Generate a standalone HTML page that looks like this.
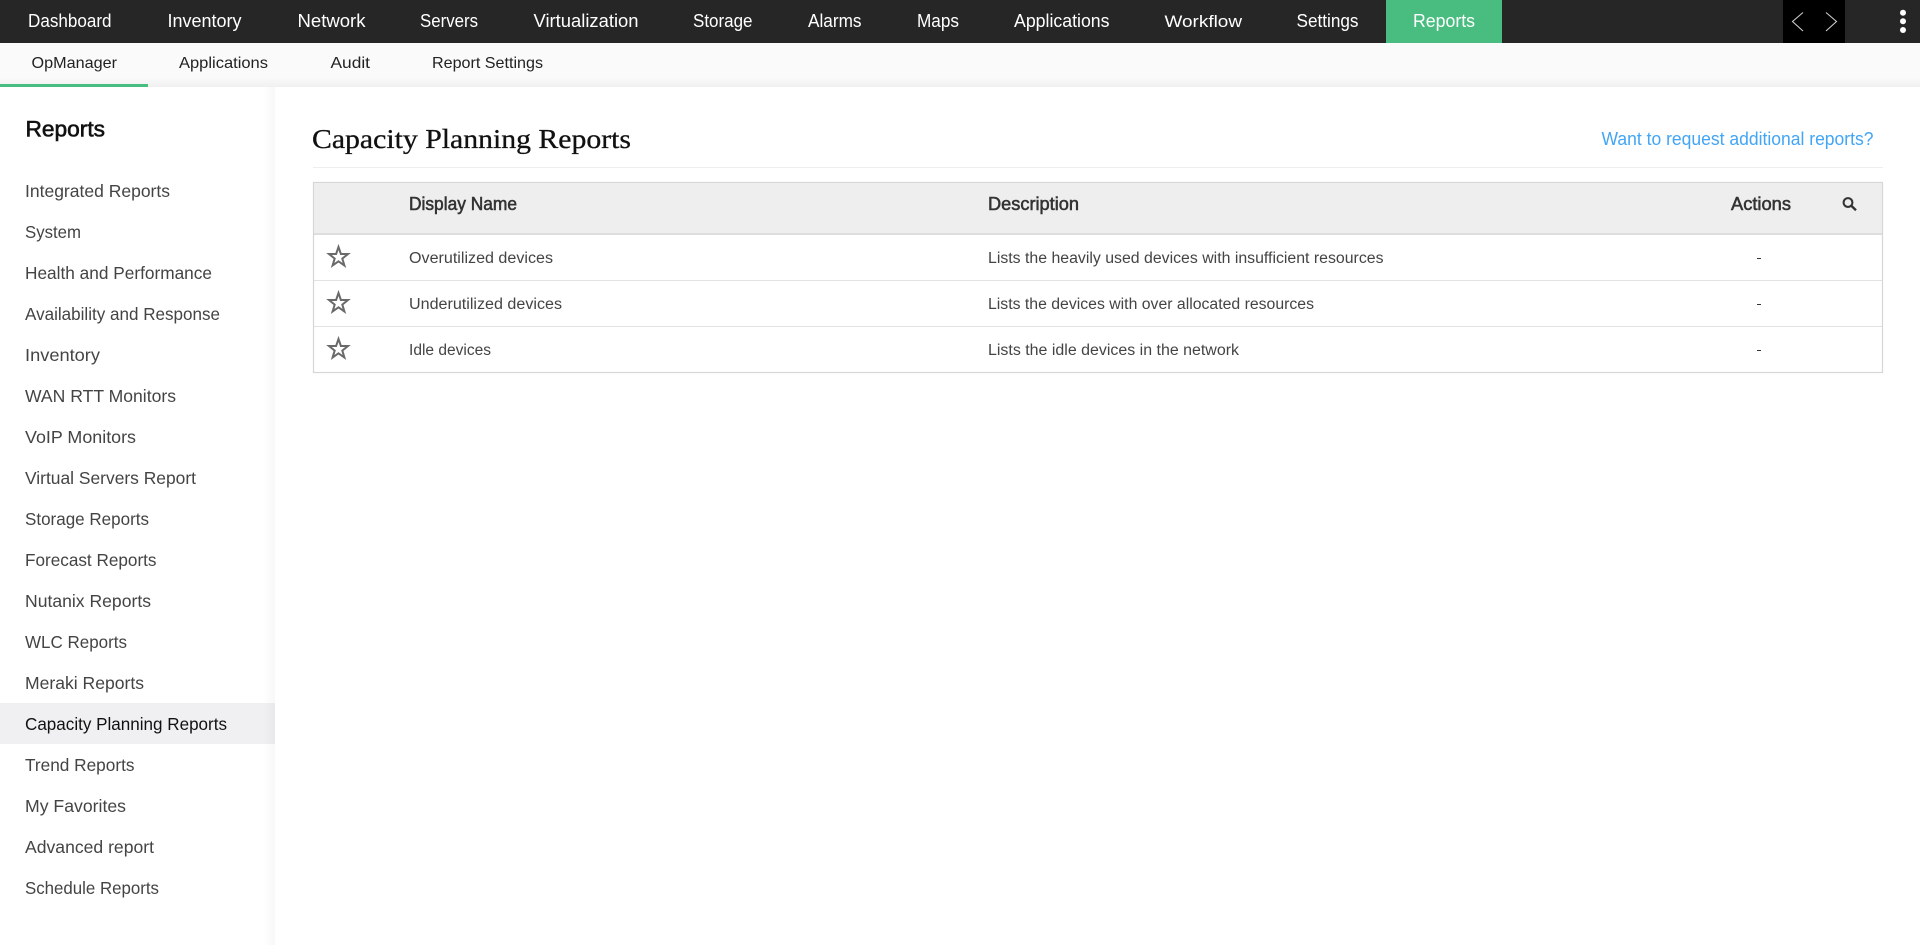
<!DOCTYPE html>
<html lang="en">
<head>
<meta charset="utf-8">
<title>Capacity Planning Reports</title>
<style>
html,body{margin:0;padding:0;width:1920px;height:945px;overflow:hidden;background:#fff}
svg{display:block;position:absolute;left:0;top:0}
text{font-family:"Liberation Sans",sans-serif}
.n{font-size:18px;fill:#fff}
.s{font-size:16px;fill:#222}
.m{font-size:17.5px;fill:#444}
.h{font-size:18px;fill:#333;stroke:#333;stroke-width:.55}
.r{font-size:15.5px;fill:#444}
</style>
</head>
<body>
<svg width="1920" height="945" viewBox="0 0 1920 945" xmlns="http://www.w3.org/2000/svg">
<defs>
<linearGradient id="gs" x1="0" x2="1" y1="0" y2="0"><stop offset="0" stop-color="#000" stop-opacity="0"/><stop offset="1" stop-color="#000" stop-opacity=".03"/></linearGradient>
<linearGradient id="gb" x1="0" x2="0" y1="0" y2="1"><stop offset="0" stop-color="#000" stop-opacity="0"/><stop offset="1" stop-color="#000" stop-opacity=".04"/></linearGradient>
</defs>
<rect x="0" y="0" width="1920" height="43" fill="#262626"/>
<rect x="1386" y="0" width="116" height="43" fill="#48bd7f"/>
<rect x="1783" y="0" width="62" height="43" fill="#000"/>
<path d="M1803 12.5L1792.5 21.5L1803 31" fill="none" stroke="#ccc" stroke-width="1.1"/>
<path d="M1826 12.5L1836.5 21.5L1826 31" fill="none" stroke="#ccc" stroke-width="1.1"/>
<circle cx="1903" cy="12.7" r="3" fill="#fff"/><circle cx="1903" cy="21.3" r="3" fill="#fff"/><circle cx="1903" cy="30" r="3" fill="#fff"/>
<g class="nav">
<text class="n" x="28" y="27" textLength="83.5" lengthAdjust="spacingAndGlyphs">Dashboard</text>
<text class="n" x="167.5" y="27" textLength="74" lengthAdjust="spacingAndGlyphs">Inventory</text>
<text class="n" x="297.5" y="27" textLength="68" lengthAdjust="spacingAndGlyphs">Network</text>
<text class="n" x="420" y="27" textLength="58" lengthAdjust="spacingAndGlyphs">Servers</text>
<text class="n" x="533.5" y="27" textLength="105" lengthAdjust="spacingAndGlyphs">Virtualization</text>
<text class="n" x="693" y="27" textLength="59.5" lengthAdjust="spacingAndGlyphs">Storage</text>
<text class="n" x="808" y="27" textLength="53.5" lengthAdjust="spacingAndGlyphs">Alarms</text>
<text class="n" x="917" y="27" textLength="42" lengthAdjust="spacingAndGlyphs">Maps</text>
<text class="n" x="1014" y="27" textLength="95.5" lengthAdjust="spacingAndGlyphs">Applications</text>
<text class="n" x="1164.5" y="27" font-size="17" style="font-size:17px" textLength="77.5" lengthAdjust="spacingAndGlyphs">Workflow</text>
<text class="n" x="1296.5" y="27" textLength="62" lengthAdjust="spacingAndGlyphs">Settings</text>
<text class="n" x="1413" y="27" textLength="62" lengthAdjust="spacingAndGlyphs">Reports</text>
</g>
<rect x="0" y="43" width="1920" height="44" fill="#fafafa"/>
<rect x="0" y="77" width="1920" height="10" fill="url(#gb)"/>
<rect x="0" y="84" width="148" height="3" fill="#48bd7f"/>
<text class="s" x="31.5" y="68" textLength="85.5" lengthAdjust="spacingAndGlyphs">OpManager</text>
<text class="s" x="179" y="68" textLength="89" lengthAdjust="spacingAndGlyphs">Applications</text>
<text class="s" x="330.5" y="68" textLength="39.5" lengthAdjust="spacingAndGlyphs">Audit</text>
<text class="s" x="432" y="68" textLength="111" lengthAdjust="spacingAndGlyphs">Report Settings</text>

<rect x="0" y="703" width="275" height="41" fill="#f0f0f2"/>
<rect x="263" y="87" width="12" height="858" fill="url(#gs)"/>
<text x="25.5" y="136.5" font-size="22" fill="#111" stroke="#111" stroke-width=".6" textLength="79.5" lengthAdjust="spacingAndGlyphs">Reports</text>
<text class="m" x="25" y="197" textLength="145" lengthAdjust="spacingAndGlyphs">Integrated Reports</text>
<text class="m" x="25" y="238" textLength="56" lengthAdjust="spacingAndGlyphs">System</text>
<text class="m" x="25" y="279" textLength="187" lengthAdjust="spacingAndGlyphs">Health and Performance</text>
<text class="m" x="25" y="320" textLength="195" lengthAdjust="spacingAndGlyphs">Availability and Response</text>
<text class="m" x="25" y="361" textLength="75" lengthAdjust="spacingAndGlyphs">Inventory</text>
<text class="m" x="25" y="402" textLength="151" lengthAdjust="spacingAndGlyphs">WAN RTT Monitors</text>
<text class="m" x="25" y="443" textLength="111" lengthAdjust="spacingAndGlyphs">VoIP Monitors</text>
<text class="m" x="25" y="484" textLength="171" lengthAdjust="spacingAndGlyphs">Virtual Servers Report</text>
<text class="m" x="25" y="525" textLength="124" lengthAdjust="spacingAndGlyphs">Storage Reports</text>
<text class="m" x="25" y="566" textLength="131.5" lengthAdjust="spacingAndGlyphs">Forecast Reports</text>
<text class="m" x="25" y="607" textLength="126" lengthAdjust="spacingAndGlyphs">Nutanix Reports</text>
<text class="m" x="25" y="648" textLength="102" lengthAdjust="spacingAndGlyphs">WLC Reports</text>
<text class="m" x="25" y="689" textLength="119" lengthAdjust="spacingAndGlyphs">Meraki Reports</text>
<text class="m" x="25" y="730" textLength="202" lengthAdjust="spacingAndGlyphs" style="fill:#111">Capacity Planning Reports</text>
<text class="m" x="25" y="771" textLength="109.5" lengthAdjust="spacingAndGlyphs">Trend Reports</text>
<text class="m" x="25" y="812" textLength="101" lengthAdjust="spacingAndGlyphs">My Favorites</text>
<text class="m" x="25" y="853" textLength="129" lengthAdjust="spacingAndGlyphs">Advanced report</text>
<text class="m" x="25" y="894" textLength="134" lengthAdjust="spacingAndGlyphs">Schedule Reports</text>

<text x="312" y="148" font-size="27" fill="#111" stroke="#111" stroke-width=".3" style="font-family:'Liberation Serif',serif" textLength="319" lengthAdjust="spacingAndGlyphs">Capacity Planning Reports</text>
<text x="1601.5" y="145" font-size="18" fill="#42a5f5" textLength="272" lengthAdjust="spacingAndGlyphs">Want to request additional reports?</text>
<rect x="313" y="167" width="1570" height="1" fill="#eeeeee"/>

<rect x="313.5" y="182.5" width="1569" height="190" fill="#fff" stroke="#d6d6d6" stroke-width="1.2"/>
<rect x="314" y="183" width="1568" height="50" fill="#eeeeee"/>
<rect x="314" y="233" width="1568" height="2" fill="#dddddd"/>
<rect x="314" y="280" width="1568" height="1" fill="#e2e2e2"/>
<rect x="314" y="326" width="1568" height="1" fill="#e2e2e2"/>
<text class="h" x="409" y="210" textLength="108" lengthAdjust="spacingAndGlyphs">Display Name</text>
<text class="h" x="988" y="210" textLength="91" lengthAdjust="spacingAndGlyphs">Description</text>
<text class="h" x="1731" y="210" textLength="60" lengthAdjust="spacingAndGlyphs">Actions</text>
<circle cx="1848" cy="202.5" r="4.4" fill="none" stroke="#333" stroke-width="2"/>
<path d="M1851.3 205.8L1856 210.3" stroke="#333" stroke-width="2.4" fill="none"/>

<g fill="none" stroke="#6a6a6a" stroke-width="2" stroke-linejoin="miter">
<path d="M338.5 247L340.9 254H348L342.3 258.6L344.4 265.5L338.5 261.3L332.6 265.5L334.7 258.6L329 254H336.1Z"/>
<path d="M338.5 293L340.9 300H348L342.3 304.6L344.4 311.5L338.5 307.3L332.6 311.5L334.7 304.6L329 300H336.1Z"/>
<path d="M338.5 339L340.9 346H348L342.3 350.6L344.4 357.5L338.5 353.3L332.6 357.5L334.7 350.6L329 346H336.1Z"/>
</g>
<text class="r" x="409" y="263" textLength="144" lengthAdjust="spacingAndGlyphs">Overutilized devices</text>
<text class="r" x="409" y="309" textLength="153" lengthAdjust="spacingAndGlyphs">Underutilized devices</text>
<text class="r" x="409" y="355" textLength="82" lengthAdjust="spacingAndGlyphs">Idle devices</text>
<text class="r" x="988" y="263" textLength="395.5" lengthAdjust="spacingAndGlyphs">Lists the heavily used devices with insufficient resources</text>
<text class="r" x="988" y="309" textLength="326" lengthAdjust="spacingAndGlyphs">Lists the devices with over allocated resources</text>
<text class="r" x="988" y="355" textLength="251" lengthAdjust="spacingAndGlyphs">Lists the idle devices in the network</text>
<rect x="1757" y="258" width="4" height="1" fill="#333"/>
<rect x="1757" y="304" width="4" height="1" fill="#333"/>
<rect x="1757" y="350" width="4" height="1" fill="#333"/>
</svg>
</body>
</html>
